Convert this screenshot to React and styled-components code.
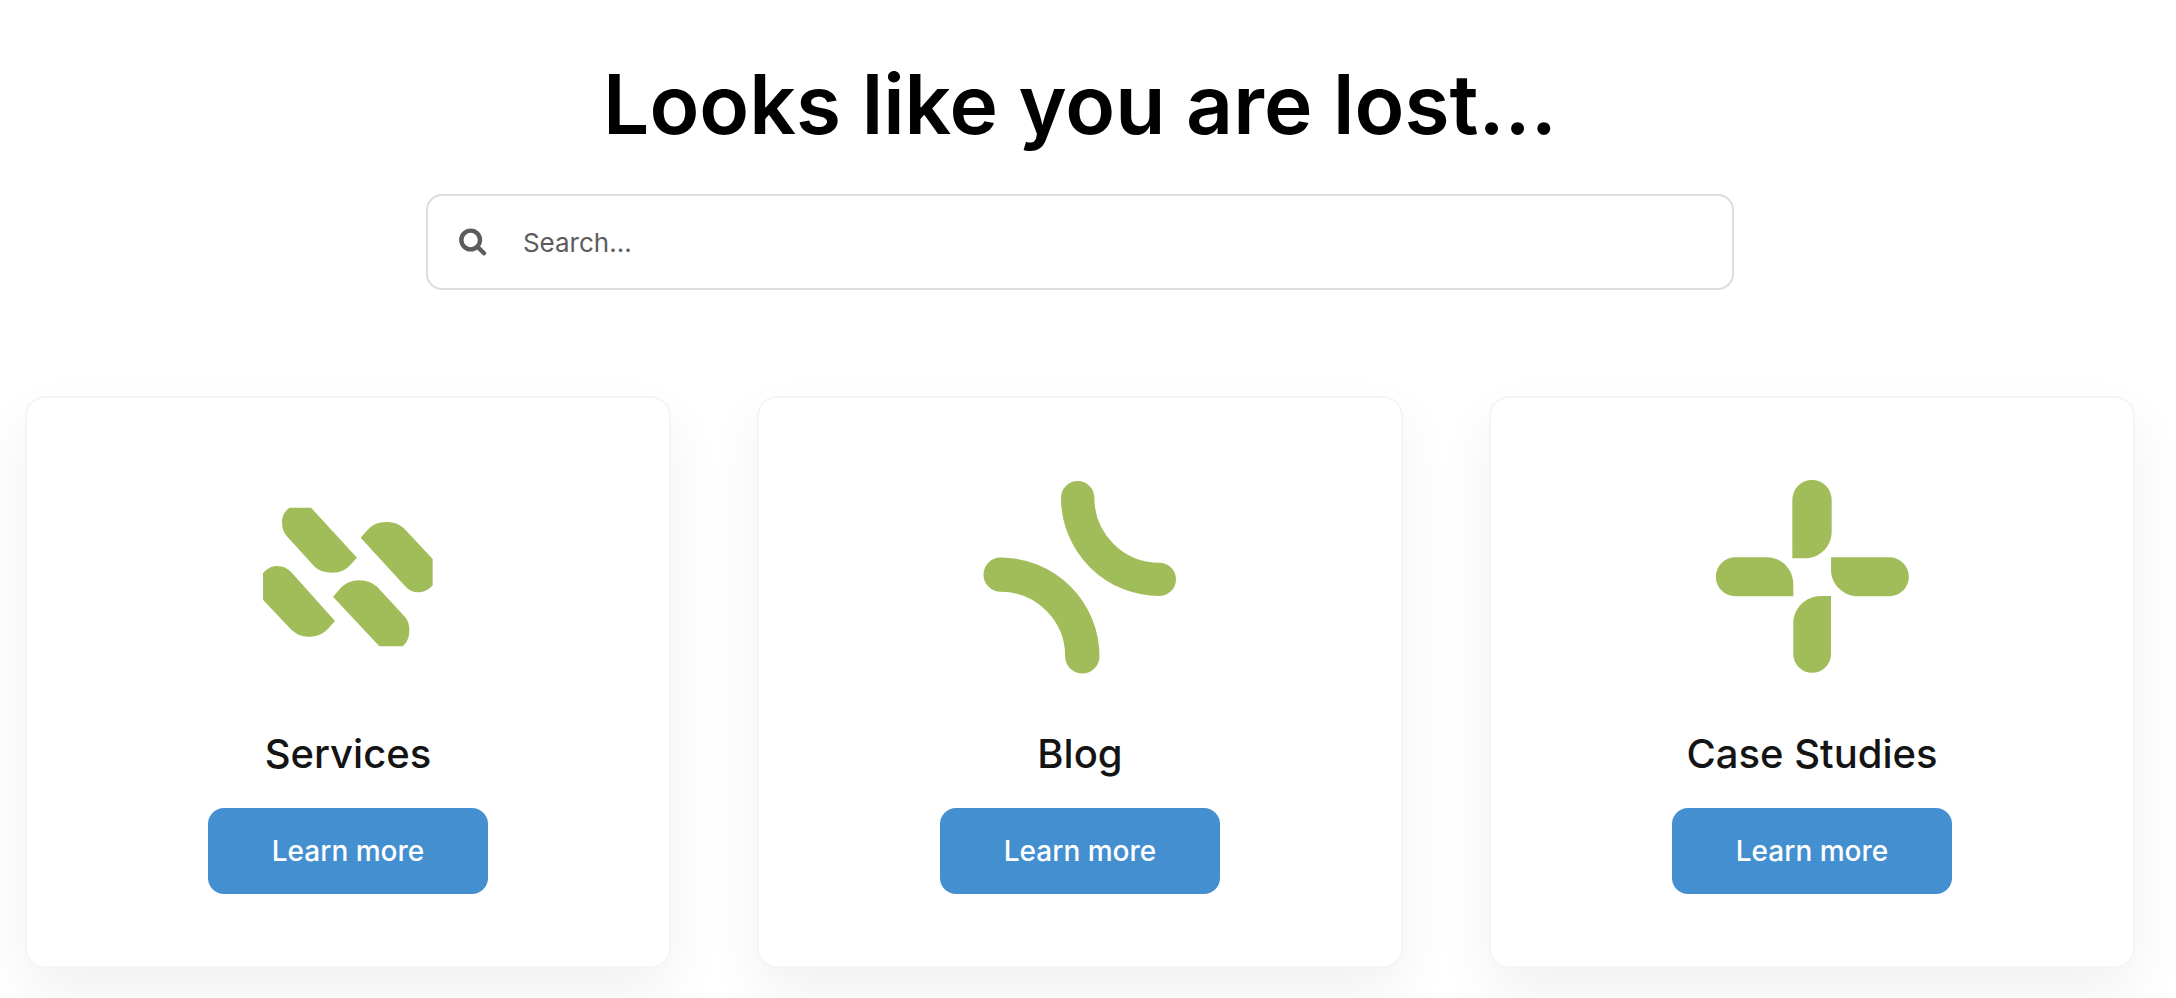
import React from 'react';
import styled, { createGlobalStyle } from 'styled-components';

const GlobalStyle = createGlobalStyle`
  *, *::before, *::after {
    box-sizing: border-box;
  }

  body {
    margin: 0;
    background: #fff;
    color: #141414;
    font-family: 'Inter', 'Liberation Sans', sans-serif;
  }
`;

const Page = styled.main`
  display: flex;
  flex-direction: column;
  align-items: center;
  padding: 49px 41px 32px 25px;
`;

const Title = styled.h1`
  margin: 0 0 33px;
  color: #000;
  font-size: 82px;
  font-weight: 600;
  line-height: 112px;
  text-align: center;
`;

const SearchForm = styled.form`
  display: flex;
  align-items: center;
  width: 62%;
  height: 96px;
  padding: 0 31px;
  border: 2px solid #dcdcdc;
  border-radius: 16px;
  color: #5c5c5c;
`;

const SearchLabel = styled.label`
  display: flex;
`;

const SearchGlyph = styled.svg`
  width: 28px;
  height: 28px;
`;

const SearchInput = styled.input`
  flex: 1;
  min-width: 0;
  height: 100%;
  padding: 0 0 0 36px;
  border: 0;
  outline: 0;
  background: transparent;
  color: inherit;
  font-family: inherit;
  font-size: 26px;

  &::placeholder {
    color: #5c5c5c;
    opacity: 1;
  }
`;

const Cards = styled.section`
  display: grid;
  grid-template-columns: repeat(3, 1fr);
  gap: 86px;
  width: 100%;
  margin-top: 106px;
`;

const Card = styled.article`
  display: flex;
  flex-direction: column;
  align-items: center;
  padding: 83px 32px 72px;
  border: 2px solid #f5f5f5;
  border-radius: 20px;
  background: #fff;
  box-shadow: 0 24px 56px rgba(0, 0, 0, 0.06);
`;

const CardIcon = styled.svg`
  width: 192px;
  height: 192px;
  overflow: visible;
  color: #a1bd5a;
`;

const CardTitle = styled.h2`
  margin: 54px 0 28px;
  font-size: 40px;
  font-weight: 500;
  line-height: 53px;
`;

const CardButton = styled.button`
  width: 280px;
  height: 86px;
  border: 0;
  border-radius: 16px;
  background: #448fd0;
  color: #fff;
  font-family: inherit;
  font-size: 28px;
  font-weight: 500;
  cursor: pointer;
`;

const SearchIcon = () => (
  <SearchGlyph viewBox="0 0 84 84" fill="none" stroke="currentColor" strokeLinecap="round" aria-hidden="true">
    <circle cx="35" cy="36" r="28" strokeWidth="13" />
    <path d="M57 58L75 76" strokeWidth="13" />
  </SearchGlyph>
);

const ServicesIcon = () => (
  <CardIcon viewBox="0 0 576 576" fill="currentColor" aria-hidden="true">
    <path d="M112 80H177L315 230L294 253C281 268 264 275 242 275C218 275 201 270 186 255L106 167C95 156 90 142 90 124C90 106 98 91 112 80Z" />
    <path d="M326 170L344 150C359 132 378 123 402 123C427 123 444 130 460 146L542 234V313C531 326 516 334 499 334C483 334 470 327 459 315Z" />
    <path d="M33 277C44 263 58 255 76 255C92 255 106 261 118 274L249 420L228 443C211 460 194 467 169 467C148 467 130 458 115 443L33 356Z" />
    <path d="M452 496H382L243 347L264 323C281 306 298 298 321 298C345 298 364 306 381 323L461 410C469 420 472 434 472 448C472 468 466 484 452 496Z" />
  </CardIcon>
);

const BlogIcon = () => (
  <CardIcon viewBox="0 0 576 576" fill="none" stroke="currentColor" strokeLinecap="round" aria-hidden="true">
    <path d="M281 50A245 245 0 0 0 526 295" strokeWidth="100" />
    <path d="M50 281A245 245 0 0 1 295 526" strokeWidth="103" />
  </CardIcon>
);

const CaseStudiesIcon = () => (
  <CardIcon viewBox="0 0 576 576" fill="currentColor" aria-hidden="true">
    <path d="M229 56A59 59 0 0 1 347 56V152C347 196 311 232 267 232H229Z" />
    <path d="M58 229H153C197 229 232 264 232 310V346H58A58 58 0 0 1 58 229Z" />
    <path d="M345 229H520A58 58 0 0 1 520 346H428C382 346 345 310 345 266Z" />
    <path d="M345 345V519A56 56 0 0 1 232 519V428C232 382 268 345 316 345Z" />
  </CardIcon>
);

const cards = [
  { title: 'Services', Icon: ServicesIcon },
  { title: 'Blog', Icon: BlogIcon },
  { title: 'Case Studies', Icon: CaseStudiesIcon },
];

const App = () => {
  return (
    <>
      <GlobalStyle />
      <Page>
        <Title>Looks like you are lost...</Title>

        <SearchForm role="search" onSubmit={(e) => e.preventDefault()}>
          <SearchLabel htmlFor="search" aria-label="Search">
            <SearchIcon />
          </SearchLabel>
          <SearchInput id="search" type="text" placeholder="Search..." />
        </SearchForm>

        <Cards>
          {cards.map(({ title, Icon }) => (
            <Card key={title}>
              <Icon />
              <CardTitle>{title}</CardTitle>
              <CardButton type="button">Learn more</CardButton>
            </Card>
          ))}
        </Cards>
      </Page>
    </>
  );
};

export default App;
